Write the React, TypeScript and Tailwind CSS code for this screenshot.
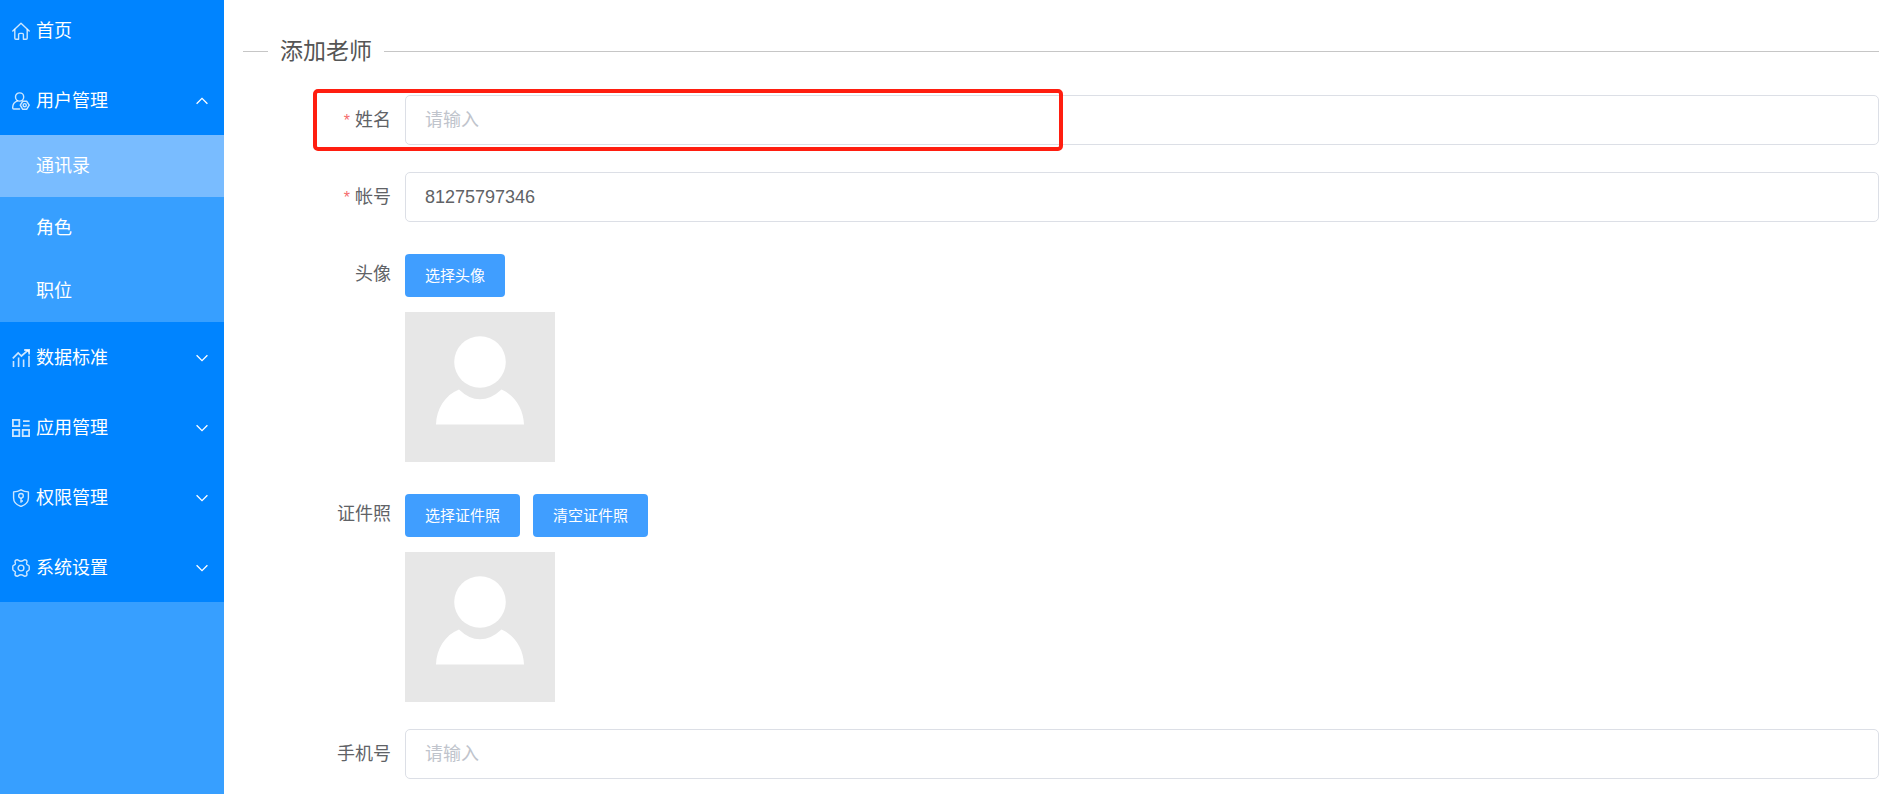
import React from "react";

type IconProps = { className?: string };

const iconBase = {
  viewBox: "0 0 18 18",
  fill: "none",
  stroke: "currentColor",
  strokeWidth: 1.4,
  "aria-hidden": true,
} as const;

const iconClass = "size-[18px] shrink-0 text-white/80";

function HomeIcon() {
  return (
    <svg {...iconBase} className={iconClass} strokeLinejoin="round" strokeLinecap="round">
      <path d="M0.8 9 L9 1.2 L17.2 9" />
      <path d="M2.8 7.4 V16.2 Q2.8 17.2 3.8 17.2 H6.6 V12.6 Q6.6 11.4 7.8 11.4 H10.2 Q11.4 11.4 11.4 12.6 V17.2 H14.2 Q15.2 17.2 15.2 16.2 V7.4" />
    </svg>
  );
}

function UserIcon() {
  return (
    <svg {...iconBase} className={iconClass} strokeLinecap="round">
      <circle cx="7.6" cy="5" r="4.1" />
      <path d="M5.4 8.8 C2.4 10 0.7 12.4 0.7 15.4 V16 Q0.7 17 1.7 17 H7.6" />
      <path d="M10.8 9.2 H14.6 L17.2 13.2 L14.8 17.2 H10.6 L8.3 13.2 Z" strokeWidth="1.5" strokeLinejoin="round" />
      <circle cx="12.7" cy="13.2" r="1.6" />
    </svg>
  );
}

function ChartIcon() {
  return (
    <svg {...iconBase} className={iconClass}>
      <path d="M0.8 9.4 L6.2 4 L9.4 7 L15.6 1.6" strokeWidth="1.7" />
      <path d="M12.2 1 H17.2 V5.6" strokeWidth="1.8" />
      <path d="M14 1 H17.2 V4.2 Z" fill="currentColor" stroke="none" />
      <path d="M1.5 12 V18 M6.6 8.4 V18 M11.6 10.4 V18 M17 6.8 V18" strokeWidth="1.6" />
    </svg>
  );
}

function AppsIcon() {
  return (
    <svg {...iconBase} className={iconClass} strokeWidth={1.8}>
      <rect x="0.9" y="0.9" width="6.4" height="6.2" />
      <rect x="0.9" y="10.9" width="6.4" height="6.2" />
      <rect x="10.7" y="10.9" width="6.4" height="6.2" />
      <path d="M11 2.2 H17.6 M11 6.6 H17.6" />
    </svg>
  );
}

function ShieldIcon() {
  return (
    <svg {...iconBase} className={iconClass} strokeLinejoin="round">
      <path d="M9 0.8 C11 2 13.8 2.8 16.4 2.9 V9 C16.4 13 13.2 16 9 17.5 C4.8 16 1.6 13 1.6 9 V2.9 C4.2 2.8 7 2 9 0.8 Z" />
      <circle cx="9" cy="6.8" r="2.3" />
      <path d="M9 9.1 V13.8 M9 12 H11" />
    </svg>
  );
}

function GearIcon() {
  return (
    <svg {...iconBase} className={iconClass} strokeLinejoin="round">
      <path d="M5.4 0.8 C6.4 0.8 6.9 2.2 9 2.2 C11.1 2.2 11.6 0.8 12.6 0.8 C13.8 0.8 15 1.8 15 2.8 C15 3.6 14.3 4 14.6 5 C15 6.2 17.2 6.2 17.2 7.4 V10.6 C17.2 11.8 15 11.8 14.6 13 C14.3 14 15 14.4 15 15.2 C15 16.2 13.8 17.2 12.6 17.2 C11.6 17.2 11.1 15.8 9 15.8 C6.9 15.8 6.4 17.2 5.4 17.2 C4.2 17.2 3 16.2 3 15.2 C3 14.4 3.7 14 3.4 13 C3 11.8 0.8 11.8 0.8 10.6 V7.4 C0.8 6.2 3 6.2 3.4 5 C3.7 4 3 3.6 3 2.8 C3 1.8 4.2 0.8 5.4 0.8 Z" />
      <circle cx="9" cy="9" r="2.9" />
    </svg>
  );
}

function Chevron({ className = "" }: IconProps) {
  return (
    <svg viewBox="0 0 12 8" fill="none" stroke="currentColor" strokeWidth="1.3" aria-hidden="true" className={`ml-auto h-2 w-3 ${className}`}>
      <path d="M0.6 1.2 L6 6.6 L11.4 1.2" />
    </svg>
  );
}

function MenuGroup({ icon, label, open = false }: { icon: React.ReactNode; label: string; open?: boolean }) {
  return (
    <button type="button" aria-expanded={open} className="flex h-[70px] w-full items-center gap-1.5 bg-[#0084ff] pt-0.5 pr-4 pl-3 text-left">
      {icon}
      <span>{label}</span>
      <Chevron className={open ? "rotate-180" : ""} />
    </button>
  );
}

function Sidebar() {
  return (
    <nav className="w-56 shrink-0 bg-[#379fff] text-lg text-white">
      <a href="#home" className="flex h-[65px] items-center gap-1.5 bg-[#0084ff] pb-1 pl-3">
        <HomeIcon />
        <span>首页</span>
      </a>
      <MenuGroup icon={<UserIcon />} label="用户管理" open />
      <ul className="grid h-[187px] grid-rows-3">
        <li className="flex">
          <a href="#contacts" aria-current="page" className="flex flex-1 items-center bg-[#79bcff] pl-9">通讯录</a>
        </li>
        <li className="flex">
          <a href="#roles" className="flex flex-1 items-center pl-9">角色</a>
        </li>
        <li className="flex">
          <a href="#positions" className="flex flex-1 items-center pl-9">职位</a>
        </li>
      </ul>
      <MenuGroup icon={<ChartIcon />} label="数据标准" />
      <MenuGroup icon={<AppsIcon />} label="应用管理" />
      <MenuGroup icon={<ShieldIcon />} label="权限管理" />
      <MenuGroup icon={<GearIcon />} label="系统设置" />
    </nav>
  );
}

const labelClass = "w-[162px] shrink-0 pr-[14px] text-right leading-[50px]";
const inputClass =
  "h-[50px] min-w-0 flex-1 rounded-[5px] border border-[#dcdfe6] bg-white px-[19px] text-[#606266] outline-none placeholder:text-[#c0c4cc]";

function TextField({ id, label, required = false, value, highlighted = false }: { id: string; label: string; required?: boolean; value?: string; highlighted?: boolean }) {
  return (
    <div className="relative flex">
      <label htmlFor={id} className={labelClass}>
        {required && <span className="mr-[5px] text-base text-[#f56c6c]">*</span>}
        {label}
      </label>
      <input id={id} type="text" required={required} defaultValue={value} placeholder="请输入" className={inputClass} />
      {highlighted && (
        <div className="pointer-events-none absolute -inset-y-1.5 left-[70px] w-[750px] rounded-[5px] border-4 border-[#ff1e10]" />
      )}
    </div>
  );
}

function Avatar() {
  return (
    <svg viewBox="0 0 150 150" aria-hidden="true" className="size-[150px] bg-[#e7e7e7]">
      <circle cx="75" cy="50" r="25.8" fill="#fff" />
      <path d="M31 112.4 C31.5 97 40 83 54 77.5 Q64 87.3 75 87.3 Q86 87.3 96.5 77.5 C110 83.5 118.5 97 119 112.4 Z" fill="#fff" />
    </svg>
  );
}

function PhotoField({ label, actions }: { label: string; actions: string[] }) {
  return (
    <div className="flex" role="group" aria-label={label}>
      <span className={labelClass}>{label}</span>
      <div className="flex flex-col gap-[15px] pt-[5px]">
        <div className="flex gap-[13px]">
          {actions.map((action) => (
            <button key={action} type="button" className="h-[43px] rounded bg-[#409eff] px-5 text-[15px] text-white">
              {action}
            </button>
          ))}
        </div>
        <Avatar />
      </div>
    </div>
  );
}

export default function App() {
  return (
    <div className="flex min-h-screen bg-white font-['Liberation_Sans','Noto_Sans_CJK_SC',sans-serif] text-lg text-[#606266]">
      <Sidebar />
      <main className="min-w-0 flex-1 pt-9 pr-1.5 pl-[19px]">
        <form>
          <fieldset className="border-t border-[#c6c6c6]">
            <legend className="ml-[25px] px-3 text-[23px] leading-[30px] text-[#555]">添加老师</legend>
            <div className="flex flex-col gap-[27px] pt-[29px]">
              <TextField id="name" label="姓名" required highlighted />
              <TextField id="account" label="帐号" required value="81275797346" />
              <PhotoField label="头像" actions={["选择头像"]} />
              <PhotoField label="证件照" actions={["选择证件照", "清空证件照"]} />
              <TextField id="phone" label="手机号" />
            </div>
          </fieldset>
        </form>
      </main>
    </div>
  );
}
